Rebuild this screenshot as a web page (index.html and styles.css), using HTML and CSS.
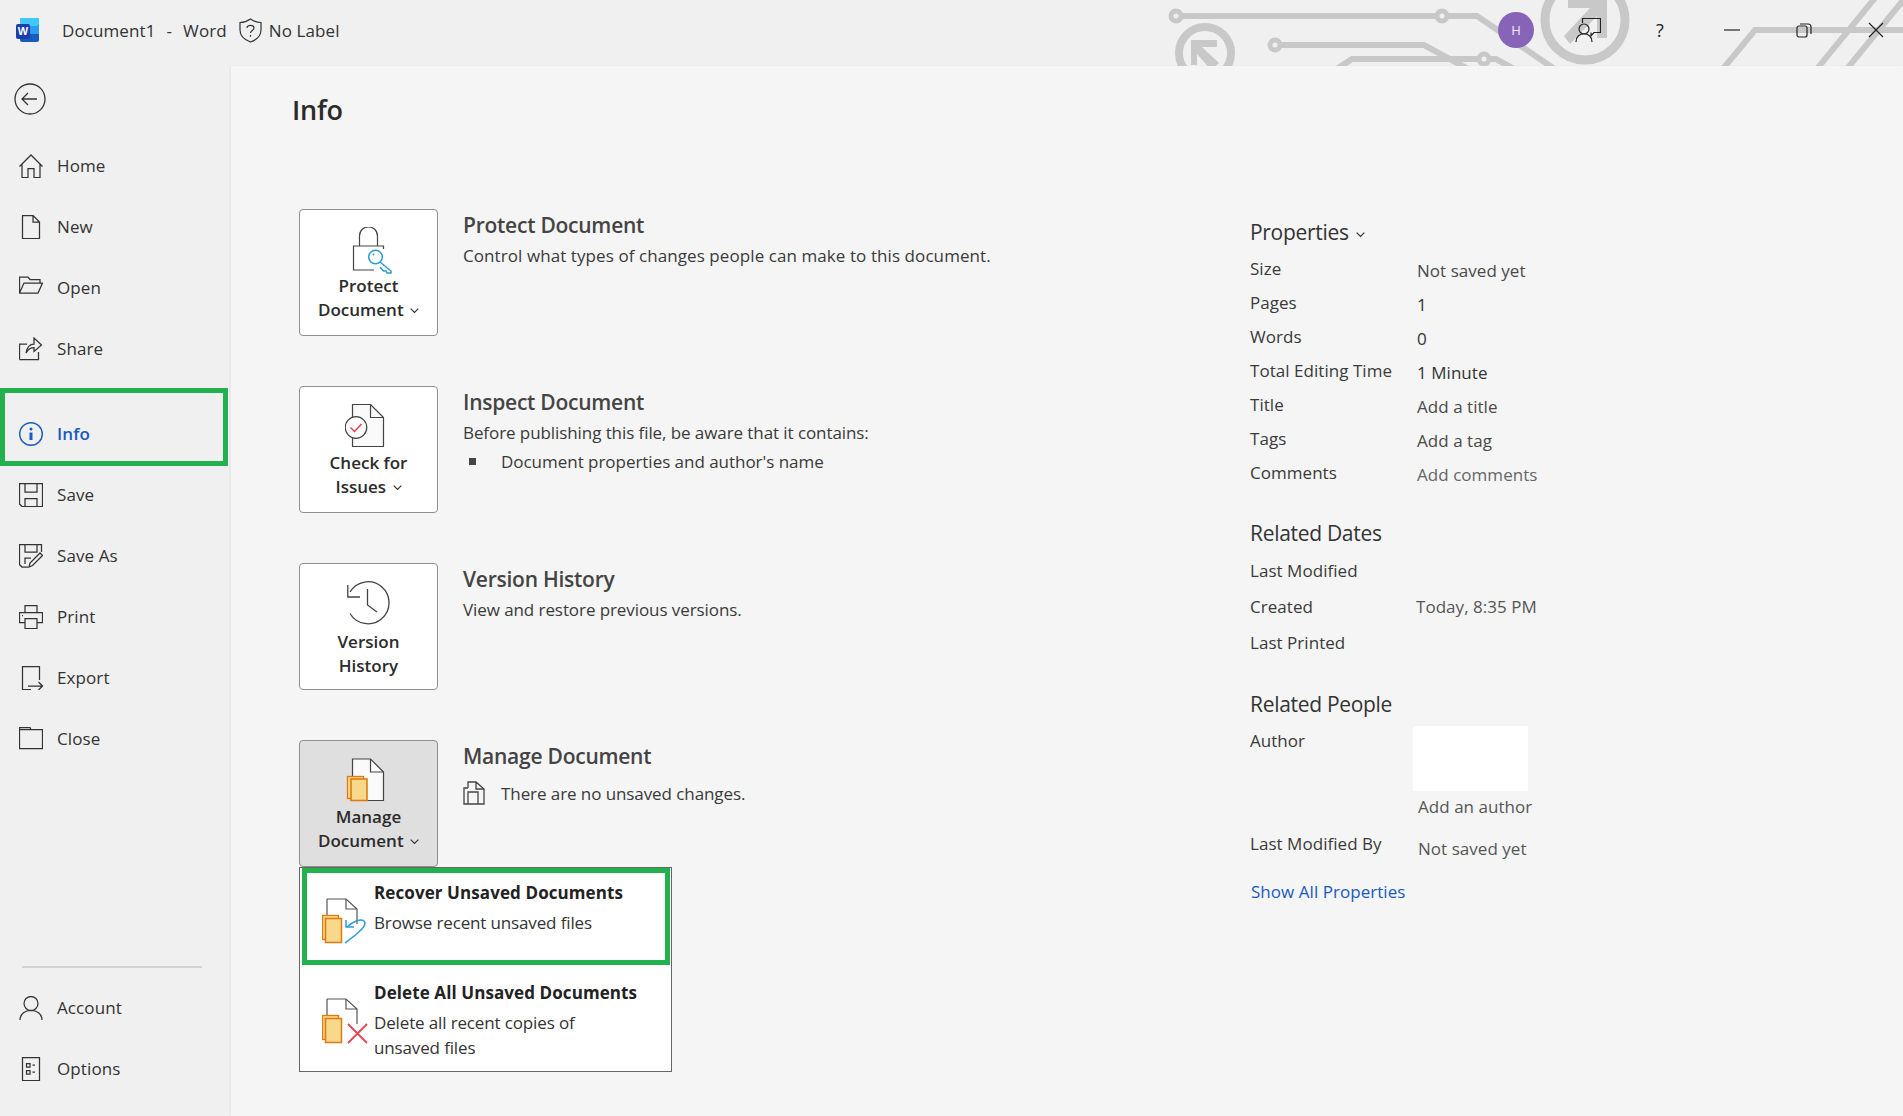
FILE: index.html
```html
<!DOCTYPE html>
<html lang="en">
<head>
<meta charset="utf-8">
<title>Document1 - Word</title>
<link rel="stylesheet" href="styles.css">
</head>
<body>
<header class="titlebar">
  <svg class="circuit" width="753" height="66" viewBox="1150 0 753 66" fill="none" stroke="#c8c8c8" stroke-width="6">
    <path d="M1176 16H1477L1556 70"/>
    <path d="M1275 45H1424L1470 70"/>
    <path d="M1335 70L1352 59H1496L1516 70"/>
    <path d="M1722 70L1755 30H1903"/>
    <path d="M1816 70L1875 -2"/>
    <path d="M1846 70L1905 -2"/>
    <circle cx="1176" cy="16" r="5" fill="#f0f0f0" stroke-width="5"/>
    <circle cx="1442" cy="16" r="5" fill="#f0f0f0" stroke-width="5"/>
    <circle cx="1275" cy="45" r="5" fill="#f0f0f0" stroke-width="5"/>
    <circle cx="1484" cy="59" r="5" fill="#f0f0f0" stroke-width="5"/>
    <circle cx="1205" cy="53" r="26" stroke-width="8"/>
    <circle cx="1585" cy="20" r="40" stroke-width="9"/>
    <path d="M1191 65V40H1217V47H1202L1219 63L1211 70L1197 54V65Z" fill="#c8c8c8" stroke="none"/>
    <path d="M1568 0H1607V38H1597V16L1570 44L1564 36L1590 8H1568Z" fill="#c8c8c8" stroke="none"/>
  </svg>
  <div class="title-left">
    <svg class="word-logo" width="24" height="24" viewBox="0 0 24 24">
      <rect x="4" y="0" width="19" height="24" rx="2" fill="#185abd"/>
      <rect x="4" y="0" width="19" height="8" rx="2" fill="#41c8fb"/>
      <rect x="4" y="8" width="19" height="8" fill="#2b9cf0"/>
      <rect x="0" y="6" width="14" height="15" rx="2" fill="#1b3ea8"/>
      <text class="word-w" x="7" y="17" text-anchor="middle">W</text>
    </svg>
    <span class="doc-name">Document1</span>
    <span class="doc-dash">-</span>
    <span class="doc-app">Word</span>
    <svg class="shield" width="23" height="25" viewBox="0 0 23 25" fill="none" stroke="#333" stroke-width="1.2">
      <path d="M11.5 1C8 3.500 5 4.500 1 4.500V12C1 18 6 22 11.500 24C17 22 22 18 22 12V4.500C18 4.500 15 3.500 11.500 1Z"/>
      <path d="M8 10C8 6.500 15 6.500 15 10C15 12.500 11.500 12.500 11.500 15"/>
      <path d="M11.500 17V18.800"/>
    </svg>
    <span class="doc-label">No Label</span>
  </div>
  <div class="title-right">
    <div class="avatar">H</div>
    <svg class="tb-feedback" width="26" height="24" viewBox="0 0 26 24" fill="none" stroke="#222" stroke-width="1.2">
      <path d="M7.500 5V.5H25.500V14.500H19L16 18V14.500"/>
      <circle cx="9" cy="11" r="5"/>
      <path d="M1 24C1 13 17 13 17 24"/>
    </svg>
    <span class="tb-help">?</span>
    <svg class="tb-min" width="16" height="16" viewBox="0 0 16 16" stroke="#222" stroke-width="1.2"><path d="M0 8H16"/></svg>
    <svg class="tb-restore" width="16" height="16" viewBox="0 0 16 16" fill="none" stroke="#222" stroke-width="1.2"><rect x="1" y="4" width="10" height="11" rx="2"/><path d="M4 2H12C14 2 15 3 15 5V12"/></svg>
    <svg class="tb-close" width="16" height="16" viewBox="0 0 16 16" stroke="#222" stroke-width="1.2"><path d="M1 1L15 15M15 1L1 15"/></svg>
  </div>
</header>

<div class="app">
  <nav class="sidebar">
    <div class="back">
      <svg width="32" height="32" viewBox="0 0 32 32" fill="none" stroke="#333" stroke-width="1.300"><circle cx="16" cy="16" r="15"/><path d="M23 16H8M14 10L8 16L14 22"/></svg>
    </div>
    <ul class="nav-list">
      <li class="nav-item">
        <svg class="nav-icon" width="24" height="24" viewBox="0 0 24 24"><path d="M.5 12.500L12 1L23.500 12.500M3 10V23.500H9V14.500H15V23.500H21V10"/></svg>
        <span>Home</span>
      </li>
      <li class="nav-item">
        <svg class="nav-icon" width="24" height="24" viewBox="0 0 24 24"><path d="M3.500.5H14L20.500 7V23.500H3.500ZM14 .5V7H20.500"/></svg>
        <span>New</span>
      </li>
      <li class="nav-item">
        <svg class="nav-icon" width="24" height="24" viewBox="0 0 24 24"><path d="M.5 17V1H9L11 3.500H21V7M.5 17H19L23.500 7H5L.5 17Z"/></svg>
        <span>Open</span>
      </li>
      <li class="nav-item">
        <svg class="nav-icon" width="24" height="24" viewBox="0 0 24 24"><path d="M.5 22.500V7H8M.5 22.500H19.500V15M7 16C8 10 11 7 15 7V1L22.500 8L15 14.500V10.500C11 10.500 8.500 13 7 16Z"/></svg>
        <span>Share</span>
      </li>
      <li class="nav-item nav-active">
        <svg class="nav-icon" width="24" height="24" viewBox="0 0 24 24"><circle cx="12" cy="12" r="11.300"/><circle class="info-dot" cx="12" cy="7" r="1.500"/><path class="info-bar" d="M12 10.500V18"/></svg>
        <span>Info</span>
      </li>
      <li class="nav-item">
        <svg class="nav-icon" width="24" height="24" viewBox="0 0 24 24"><path d="M.5.5H23.500V23.500H3L.5 21ZM6 .5V9H18V.5M6 23.500V15.500H18V23.500"/></svg>
        <span>Save</span>
      </li>
      <li class="nav-item">
        <svg class="nav-icon" width="24" height="24" viewBox="0 0 24 24"><path d="M9 23H3L.5 20.500V.5H22.500V8M6 .5V8H18V.5M6 20V14H12"/><path d="M10 23L11 19L21 9L23.500 11.500L13.500 21.500Z"/></svg>
        <span>Save As</span>
      </li>
      <li class="nav-item">
        <svg class="nav-icon" width="24" height="24" viewBox="0 0 24 24"><path d="M6 7.500V.5H18V7.500M6 17.500H.5V7.500H23.500V17.500H18M6 13.500H18V23.500H6ZM3 10.500H4"/></svg>
        <span>Print</span>
      </li>
      <li class="nav-item">
        <svg class="nav-icon" width="24" height="24" viewBox="0 0 24 24"><path d="M20.500 14V.5H3.500V23.500H12M9 20H23.500M19.500 16L23.500 20L19.500 24"/></svg>
        <span>Export</span>
      </li>
      <li class="nav-item">
        <svg class="nav-icon" width="24" height="24" viewBox="0 0 24 24"><path d="M.5 .5H11L12 2.500H23.500V21.500H.5ZM.5 2.500H12"/></svg>
        <span>Close</span>
      </li>
    </ul>
    <div class="nav-bottom">
      <div class="nav-divider"></div>
      <div class="nav-item">
        <svg class="nav-icon" width="24" height="24" viewBox="0 0 24 24"><circle cx="12" cy="7.500" r="7"/><path d="M1 24C1 11 23 11 23 24"/></svg>
        <span>Account</span>
      </div>
      <div class="nav-item">
        <svg class="nav-icon" width="24" height="24" viewBox="0 0 24 24"><path d="M3.500.5H20.500V23.500H3.500ZM7.500 6.500H11V10H7.500ZM7.500 13.500H11V17H7.500ZM13.500 8.200H16M13.500 15.200H16"/></svg>
        <span>Options</span>
      </div>
    </div>
  </nav>

  <main class="content">
    <h1 class="page-title">Info</h1>
    <div class="panes">
      <div class="actions">
        <section class="action">
          <button class="action-btn" type="button">
            <svg class="btn-icon" width="48" height="47" viewBox="0 0 48 47" fill="none" stroke="#444" stroke-width="1.200">
              <path d="M14.500 19V9C14.500 -3 32.500 -3 32.500 9V19"/>
              <path d="M29 43H8.500V19H38.500V22"/>
              <circle cx="30.500" cy="30" r="6.800" stroke="#2b9cd8" stroke-width="1.500"/>
              <path d="M35 35L46 44V46H42L41 44H38.500L35 40" stroke="#2b9cd8" stroke-width="1.500"/>
              <circle cx="28.500" cy="27.500" r="1" fill="#2b9cd8" stroke="none"/>
            </svg>
            <span class="btn-label">Protect</span>
            <span class="btn-label">Document <svg class="chev" width="9" height="6" viewBox="0 0 9 6"><path d="M.7.7L4.500 4.500L8.300.7"/></svg></span>
          </button>
          <div class="action-text">
            <h2>Protect Document</h2>
            <p class="desc-long">Control what types of changes people can make to this document.</p>
          </div>
        </section>
        <section class="action">
          <button class="action-btn" type="button">
            <svg class="btn-icon" width="48" height="47" viewBox="0 0 48 47">
              <path d="M7.500 .5H25.500L38.500 13.500V42.500H7.500Z" fill="#fafafa" stroke="#444" stroke-width="1.200"/>
              <path d="M25.500 .5V13.500H38.500" fill="none" stroke="#444" stroke-width="1.200"/>
              <circle cx="11" cy="23.500" r="10.800" fill="#fafafa" stroke="#444" stroke-width="1.200"/>
              <path d="M5.500 23.500L9.500 27.500L16.500 20" fill="none" stroke="#e8394a" stroke-width="1.400"/>
            </svg>
            <span class="btn-label">Check for</span>
            <span class="btn-label">Issues <svg class="chev" width="9" height="6" viewBox="0 0 9 6"><path d="M.7.7L4.500 4.500L8.300.7"/></svg></span>
          </button>
          <div class="action-text">
            <h2>Inspect Document</h2>
            <p>Before publishing this file, be aware that it contains:</p>
            <div class="bullet"><i class="bullet-mark"></i>Document properties and author's name</div>
          </div>
        </section>
        <section class="action">
          <button class="action-btn action-btn-history" type="button">
            <svg class="btn-icon" width="48" height="47" viewBox="0 0 48 47" fill="none" stroke="#444" stroke-width="1.300">
              <path d="M5 11A21 21 0 1 1 5 32.500"/>
              <path d="M2.800 4V16H15"/>
              <path d="M22.500 8V24L32 31"/>
            </svg>
            <span class="btn-label">Version</span>
            <span class="btn-label">History</span>
          </button>
          <div class="action-text">
            <h2>Version History</h2>
            <p>View and restore previous versions.</p>
          </div>
        </section>
        <section class="action action-last">
          <button class="action-btn action-btn-on" type="button">
            <svg class="btn-icon" width="48" height="47" viewBox="0 0 48 47">
              <path d="M7.500 1H25.500L38.500 14V42.500H7.500Z" fill="#fafafa" stroke="#444" stroke-width="1.200"/>
              <path d="M25.500 1V14H38.500" fill="none" stroke="#444" stroke-width="1.200"/>
              <rect x="2.500" y="18.500" width="16" height="22" fill="#f8d98c" stroke="#e07a10" stroke-width="1.300"/>
              <rect x="6" y="21" width="16" height="21.500" fill="#f8d98c" stroke="#e07a10" stroke-width="1.600"/>
            </svg>
            <span class="btn-label">Manage</span>
            <span class="btn-label">Document <svg class="chev" width="9" height="6" viewBox="0 0 9 6"><path d="M.7.7L4.500 4.500L8.300.7"/></svg></span>
          </button>
          <div class="action-text">
            <h2>Manage Document</h2>
            <div class="note">
              <svg width="22" height="24" viewBox="0 0 22 24" fill="none" stroke="#444" stroke-width="1.300"><path d="M5 7V1H13L21 8V23H15M13 1V8H21M5 7H1V23H15M5 11H15V23H5Z"/></svg>
              <span>There are no unsaved changes.</span>
            </div>
          </div>
          <div class="menu">
            <div class="menu-item menu-item-marked">
              <svg class="menu-icon" width="46" height="46" viewBox="0 0 46 46">
                <path d="M5 1H24L35 11V26" fill="none" stroke="#555" stroke-width="1.200"/>
                <path d="M5 1V18M24 1V11H35" fill="none" stroke="#555" stroke-width="1.200"/>
                <rect x=".5" y="17.500" width="16" height="24" fill="#f8d98c" stroke="#e07a10" stroke-width="1.300"/>
                <rect x="3.500" y="20.500" width="16" height="24" fill="#f8d98c" stroke="#e07a10" stroke-width="1.500"/>
                <path d="M23 45C31 39 47 28 42 23C39 20 30 24 25 29M24 22V29H32" fill="none" stroke="#2b9cd8" stroke-width="1.500"/>
              </svg>
              <div class="menu-text">
                <strong>Recover Unsaved Documents</strong>
                <span>Browse recent unsaved files</span>
              </div>
            </div>
            <div class="menu-item">
              <svg class="menu-icon" width="46" height="46" viewBox="0 0 46 46">
                <path d="M5 1H24L35 11V26" fill="none" stroke="#555" stroke-width="1.200"/>
                <path d="M5 1V18M24 1V11H35" fill="none" stroke="#555" stroke-width="1.200"/>
                <rect x=".5" y="17.500" width="16" height="24" fill="#f8d98c" stroke="#e07a10" stroke-width="1.300"/>
                <rect x="3.500" y="20.500" width="16" height="24" fill="#f8d98c" stroke="#e07a10" stroke-width="1.500"/>
                <path d="M26 26L45 45M45 26L26 45" stroke="#ea4455" stroke-width="1.800"/>
              </svg>
              <div class="menu-text">
                <strong>Delete All Unsaved Documents</strong>
                <span>Delete all recent copies of<br>unsaved files</span>
              </div>
            </div>
          </div>
        </section>
      </div>

      <aside class="props">
        <h3 class="props-head props-head-first">Properties <svg class="chev" width="9" height="6" viewBox="0 0 9 6"><path d="M.7.7L4.500 4.500L8.300.7"/></svg></h3>
        <dl class="prop-list">
          <div class="prop"><dt>Size</dt><dd class="muted">Not saved yet</dd></div>
          <div class="prop"><dt>Pages</dt><dd>1</dd></div>
          <div class="prop"><dt>Words</dt><dd>0</dd></div>
          <div class="prop"><dt>Total Editing Time</dt><dd>1 Minute</dd></div>
          <div class="prop"><dt>Title</dt><dd class="muted">Add a title</dd></div>
          <div class="prop"><dt>Tags</dt><dd class="muted">Add a tag</dd></div>
          <div class="prop"><dt>Comments</dt><dd class="faint">Add comments</dd></div>
        </dl>
        <h3 class="props-head">Related Dates</h3>
        <dl class="prop-list prop-dates">
          <div class="prop"><dt>Last Modified</dt></div>
          <div class="prop"><dt>Created</dt><dd class="date-value">Today, 8:35 PM</dd></div>
          <div class="prop"><dt>Last Printed</dt></div>
        </dl>
        <h3 class="props-head props-head-people">Related People</h3>
        <div class="author">
          <span class="author-label">Author</span>
          <div class="author-value">
            <div class="author-box"></div>
            <div class="author-add">Add an author</div>
          </div>
        </div>
        <div class="modified">
          <span class="author-label">Last Modified By</span>
          <span class="modified-value">Not saved yet</span>
        </div>
        <a class="show-all" href="#">Show All Properties</a>
      </aside>
    </div>
  </main>
</div>
</body>
</html>
```
FILE: styles.css
```css
*, *::after { box-sizing: border-box; }
html, body { height: 100%; }
body {
  margin: 0;
  background: #f0f0f0;
  color: #333;
  font-family: "Open Sans", "Noto Sans", sans-serif;
  font-size: 17px;
  overflow: hidden;
}
.titlebar {
  position: relative;
  height: 66px;
  display: flex;
  align-items: center;
  justify-content: space-between;
  overflow: hidden;
}
.circuit { position: absolute; left: 1150px; top: 0; }
.title-left {
  position: relative;
  display: flex;
  align-items: center;
  padding-left: 16px;
  padding-bottom: 6px;
  font-size: 17px;
  letter-spacing: .1px;
  color: #333;
}
.word-w { font: 700 11px "Liberation Sans", sans-serif; fill: #fff; }
.doc-name { margin-left: 22px; }
.doc-dash { margin-left: 11px; }
.doc-app { margin-left: 11px; }
.shield { margin-left: 12px; }
.doc-label { margin-left: 7px; }
.title-right {
  position: relative;
  display: flex;
  align-items: center;
  padding-bottom: 6px;
}
.avatar {
  width: 36px;
  height: 36px;
  border-radius: 50%;
  background: #8764b8;
  color: #f0e8f8;
  font-size: 13px;
  display: flex;
  align-items: center;
  justify-content: center;
}
.tb-feedback { margin-left: 41px; }
.tb-help { margin-left: 52px; width: 14px; text-align: center; font-size: 18px; color: #222; }
.tb-min { margin-left: 57px; }
.tb-restore { margin-left: 56px; }
.tb-close { margin-left: 56px; margin-right: 19px; }

.app { display: flex; height: 1050px; }
.sidebar {
  width: 231px;
  flex: none;
  display: flex;
  flex-direction: column;
  padding-bottom: 17px;
}
.back { height: 69px; padding: 17px 0 0 14px; }
.nav-list { list-style: none; margin: 0; padding: 0; }
.nav-item {
  position: relative;
  height: 61px;
  display: flex;
  align-items: center;
  gap: 14px;
  padding-left: 19px;
  font-size: 17px;
  letter-spacing: .1px;
  color: #333;
}
.nav-icon { fill: none; stroke: #333; stroke-width: 1.250; flex: none; }
.nav-active { margin-top: 24px; color: #185abd; font-weight: 600; }
.nav-active .nav-icon { stroke: #185abd; stroke-width: 1.400; }
.nav-active .info-dot { fill: #185abd; stroke: none; }
.nav-active .info-bar { stroke-width: 3; }
.nav-active::after {
  content: "";
  position: absolute;
  left: 0;
  top: -15px;
  width: 228px;
  height: 78px;
  border: 5px solid #22b14c;
}
.nav-bottom { margin-top: auto; }
.nav-divider { height: 2px; margin: 0 29px 9px 22px; background: #d2d2d2; }

.content {
  flex: 1;
  background: #f5f5f5;
  padding: 24px 0 0 61px;
  box-shadow: -1px 0 2px rgba(0, 0, 0, .05);
}
.page-title {
  margin: 0 0 79px;
  height: 40px;
  line-height: 40px;
  font-size: 27px;
  font-weight: 600;
  color: #2b2b2b;
  letter-spacing: -.2px;
}
.panes { display: flex; }
.actions { width: 958px; flex: none; padding-left: 7px; }
.action { position: relative; display: flex; height: 127px; margin-bottom: 50px; }
.action-last { margin-bottom: 0; }
.action-btn {
  flex: none;
  width: 139px;
  height: 127px;
  padding: 17px 0 0;
  background: #fff;
  border: 1px solid #8f8f8f;
  border-radius: 4px;
  display: flex;
  flex-direction: column;
  align-items: center;
  font-family: inherit;
  color: #2b2b2b;
}
.action-btn-on { background: #dfdfdf; }
.action-btn-history .btn-icon { margin-bottom: 2px; }
.btn-icon { flex: none; display: block; }
.btn-label {
  height: 24px;
  line-height: 24px;
  font-size: 17px;
  font-weight: 600;
  letter-spacing: 0;
  white-space: nowrap;
}
.chev { fill: none; stroke: #333; stroke-width: 1.200; margin-left: 2px; vertical-align: 2px; }
.action-text { margin-left: 25px; }
.action-text h2 {
  margin: 0;
  height: 32px;
  line-height: 32px;
  font-size: 21px;
  font-weight: 600;
  color: #444;
  letter-spacing: -.25px;
}
.action-text p {
  margin: 0;
  height: 30px;
  line-height: 30px;
  font-size: 17px;
  letter-spacing: -.08px;
  color: #3a3a3a;
}
.action-text .desc-long { letter-spacing: .08px; }
.bullet {
  display: flex;
  align-items: center;
  height: 27px;
  font-size: 17px;
  letter-spacing: -.03px;
  color: #3a3a3a;
}
.bullet-mark { width: 7px; height: 7px; margin: 0 25px 0 6px; background: #444; }
.note {
  display: flex;
  align-items: center;
  height: 42px;
  gap: 16px;
  font-size: 17px;
  letter-spacing: -.08px;
  color: #3a3a3a;
}
.menu {
  position: absolute;
  left: 0;
  top: 127px;
  width: 373px;
  height: 205px;
  background: #fff;
  border: 1px solid #666;
}
.menu-item { position: relative; display: flex; padding-left: 22px; height: 100px; }
.menu-item + .menu-item { height: 103px; }
.menu-item-marked::after {
  content: "";
  position: absolute;
  left: 2px;
  top: 0;
  width: 368px;
  height: 97px;
  border: 5px solid #22b14c;
}
.menu-icon { flex: none; margin-top: 30px; }
.menu-text { margin-left: 6px; padding-top: 12px; }
.menu-text strong {
  display: block;
  height: 25px;
  line-height: 25px;
  font-size: 17px;
  font-weight: 700;
  letter-spacing: .09px;
  color: #222;
}
.menu-text span {
  display: block;
  margin-top: 5px;
  line-height: 25px;
  font-size: 17px;
  letter-spacing: -.14px;
  color: #333;
}
.props { width: 400px; }
.props-head {
  margin: 27px 0 4px;
  height: 32px;
  line-height: 32px;
  font-size: 21px;
  font-weight: 400;
  color: #333;
  letter-spacing: -.3px;
}
.props-head-first { margin-top: 7px; }
.props-head-people { margin-top: 27px; margin-bottom: 6px; }
.prop-list { margin: 0; }
.prop {
  display: flex;
  height: 34px;
  line-height: 34px;
  font-size: 17px;
  letter-spacing: .04px;
}
.prop dt { width: 167px; color: #3a3a3a; }
.prop dd { margin: 0; padding-top: 2px; color: #333; }
.prop dd.muted { color: #4a4a4a; }
.prop dd.faint { color: #666; }
.prop-dates .prop { height: 36px; line-height: 36px; }
.prop dd.date-value { padding-top: 0; margin-left: -1px; color: #555; }
.author, .modified { display: flex; font-size: 17px; letter-spacing: .04px; }
.author { height: 103px; }
.author-label { width: 163px; color: #3a3a3a; line-height: 30px; }
.author-box { width: 115px; height: 65px; background: #fff; }
.author-add { margin-left: 5px; height: 32px; line-height: 32px; color: #555; }
.modified { height: 48px; }
.modified-value { margin: 5px 0 0 5px; line-height: 30px; color: #555; }
.show-all {
  display: block;
  margin-left: 1px;
  line-height: 30px;
  font-size: 17px;
  letter-spacing: .04px;
  color: #185abd;
  text-decoration: none;
}
```
